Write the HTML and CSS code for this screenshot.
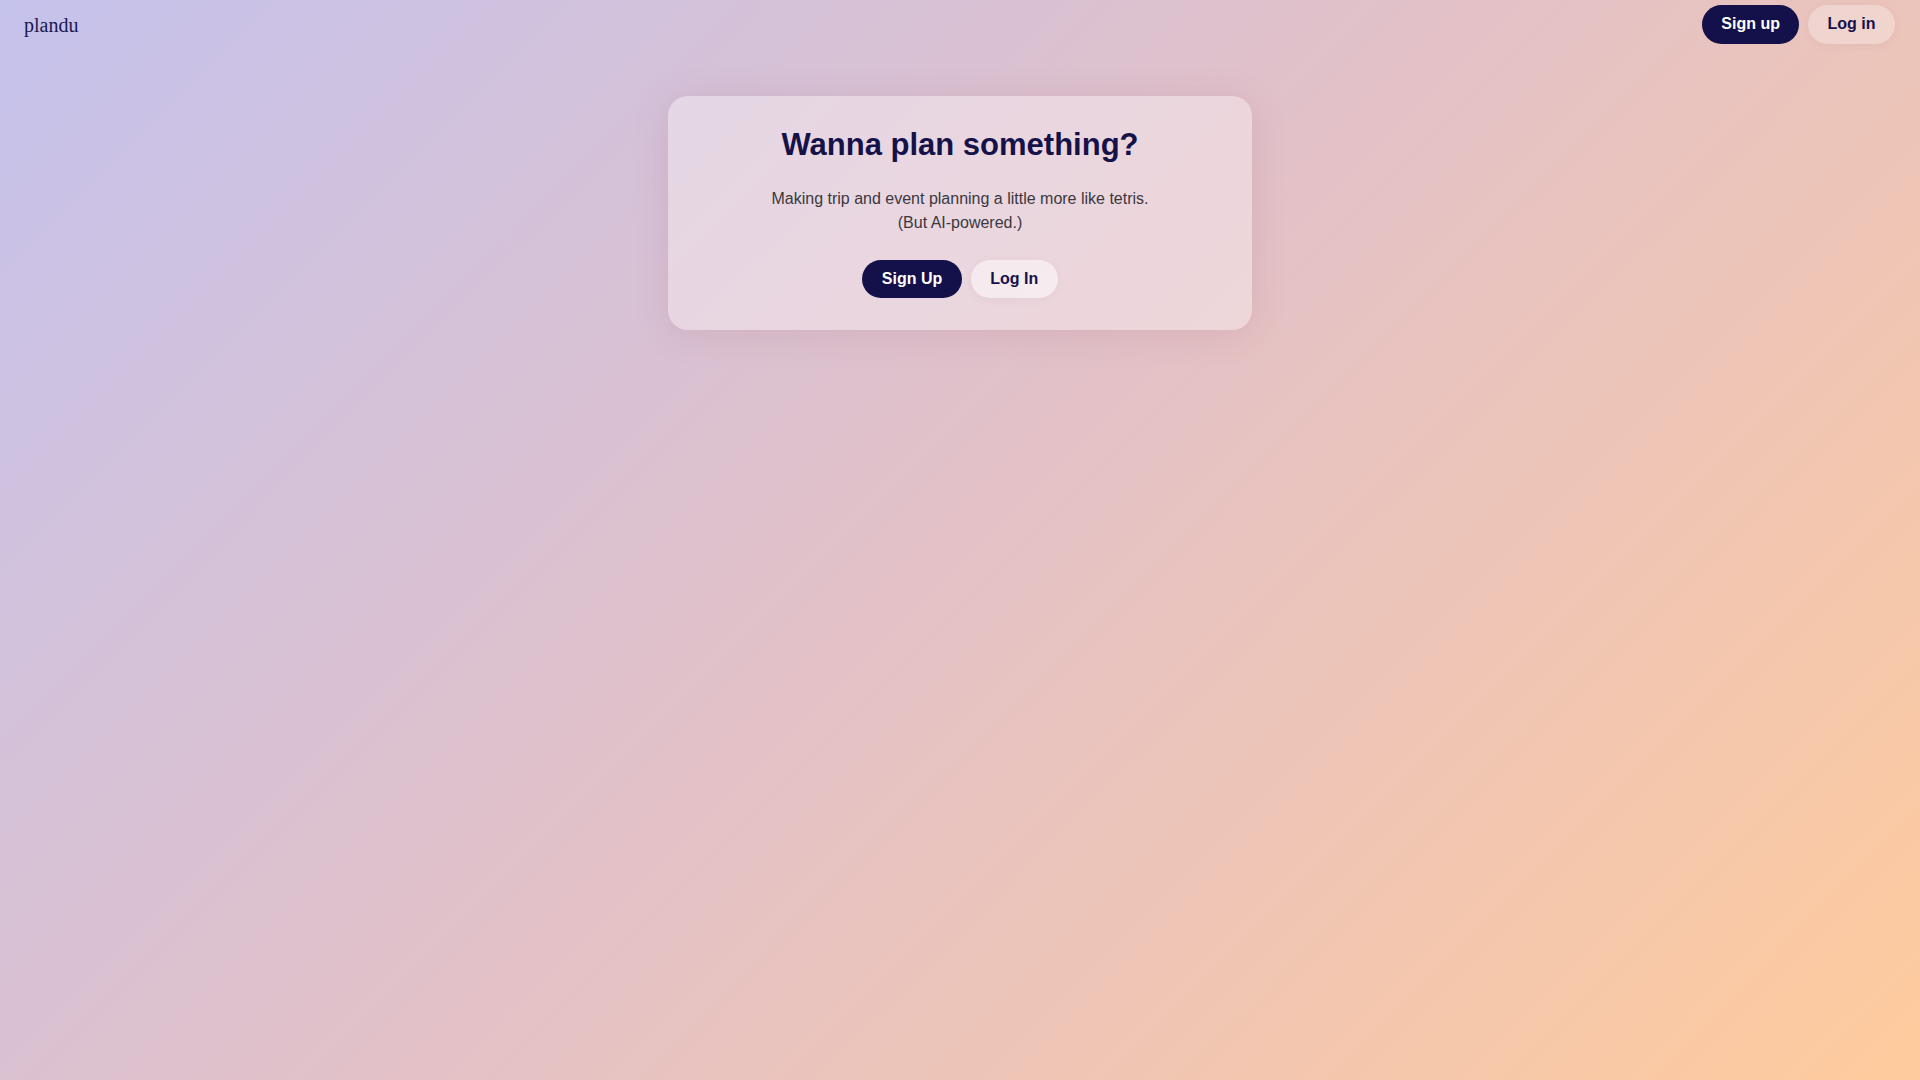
FILE: index.html
```html
<!DOCTYPE html>
<html lang="en">
<head>
<meta charset="utf-8">
<title>plandu</title>
<link rel="stylesheet" href="styles.css">
</head>
<body>
<div class="page">
  <header class="topbar">
    <div class="logo">plandu</div>
    <nav class="nav">
      <button class="btn btn-dark">Sign up</button>
      <button class="btn btn-light btn-light-top">Log in</button>
    </nav>
  </header>
  <main class="main">
    <section class="card">
      <h1 class="title">Wanna plan something?</h1>
      <p class="subtitle">Making trip and event planning a little more like tetris.<br>(But AI-powered.)</p>
      <div class="actions">
        <button class="btn btn-dark btn-card">Sign Up</button>
        <button class="btn btn-light btn-card">Log In</button>
      </div>
    </section>
  </main>
</div>
</body>
</html>
```

FILE: styles.css
```css
html, body {
  margin: 0;
  padding: 0;
  height: 100%;
}
body {
  font-family: "Liberation Sans", Arial, sans-serif;
  background: linear-gradient(135deg, #c5c2ec 0%, #e2c1c8 48%, #ffcb9d 100%);
  background-attachment: fixed;
  min-height: 100vh;
  color: #15124a;
}
.page {
  min-height: 100vh;
  display: flex;
  flex-direction: column;
}
.topbar {
  display: flex;
  align-items: center;
  justify-content: space-between;
  padding: 5px 25px 4px 24px;
  height: 39px;
}
.logo {
  font-family: "Liberation Serif", "Times New Roman", serif;
  font-size: 20px;
  color: #1b1850;
  padding-top: 2px;
}
.nav {
  display: flex;
  gap: 9px;
}
.btn {
  font-family: "Liberation Sans", Arial, sans-serif;
  font-weight: 700;
  font-size: 16px;
  line-height: 18.5px;
  padding: 10px 19px;
  border: none;
  border-radius: 999px;
  cursor: pointer;
}
.btn-dark {
  background: #14114a;
  color: #ffffff;
}
.btn-light {
  background: rgba(255, 255, 255, 0.5);
  color: #15124a;
  box-shadow: 0 2px 8px rgba(120, 60, 60, 0.06);
}
.btn-light-top {
  background: rgba(255, 255, 255, 0.28);
  padding: 10px 19.5px;
}
.btn-card {
  padding: 10px 19.5px;
}
.main {
  display: flex;
  justify-content: center;
  padding-top: 48px;
}
.card {
  width: 584px;
  box-sizing: border-box;
  padding: 31px 32px 32px;
  border-radius: 20px;
  background: rgba(255, 250, 250, 0.38);
  box-shadow: 0 4px 36px rgba(130, 60, 80, 0.13);
  text-align: center;
}
.title {
  margin: 0 0 24px;
  font-size: 31px;
  font-weight: 700;
  line-height: 35.6px;
  color: #15124a;
}
.subtitle {
  margin: 0 0 25px;
  font-size: 16px;
  line-height: 24px;
  color: #3b3840;
}
.actions {
  display: flex;
  justify-content: center;
  gap: 9px;
}
```
